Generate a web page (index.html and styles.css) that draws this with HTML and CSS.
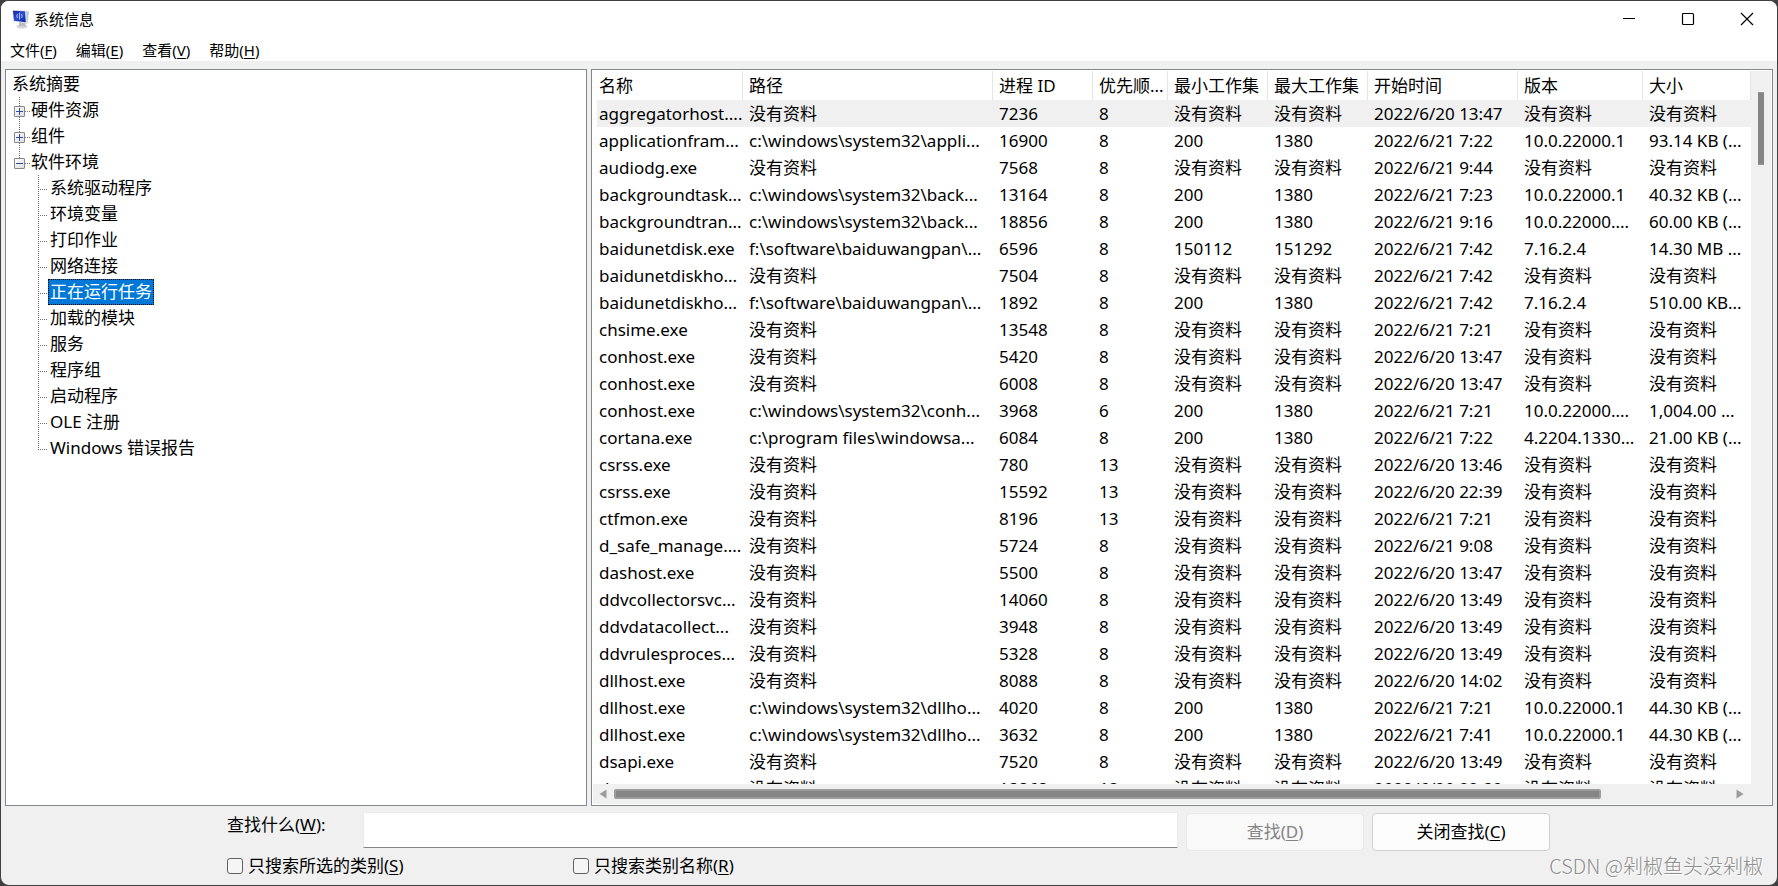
FILE: index.html
```html
<!DOCTYPE html>
<html lang="zh-CN">
<head>
<meta charset="utf-8">
<title>系统信息</title>
<link rel="stylesheet" href="styles.css">
</head>
<body>
<div class="window">
  <header class="titlebar">
    <svg class="app-icon" width="20" height="20" viewBox="0 0 20 20" aria-hidden="true">
      <defs>
        <linearGradient id="screen" x1="0" y1="0" x2="1" y2="1">
          <stop offset="0" stop-color="#16249c"/>
          <stop offset="0.500" stop-color="#2a4fd6"/>
          <stop offset="1" stop-color="#0c1f9a"/>
        </linearGradient>
      </defs>
      <ellipse cx="11" cy="17.500" rx="5.500" ry="2" fill="#d3d5d9"/>
      <path d="M8 13h6l1 4H8z" fill="#b9bcc3"/>
      <path d="M14.500 1.500l3.500 1.200-1.500 12-2.500-.7z" fill="#c3c8d2"/>
      <path d="M1.500 1l13.500.500 1 13L2.500 12.500z" fill="#dfe3ec"/>
      <path d="M2 1.800l12 .400.800 11L3 11.700z" fill="url(#screen)"/>
      <path d="M8.500 3.500v7M6.500 5q-1.500 2 0 4M10.500 5q1.500 2 0 4" stroke="#a9bcff" fill="none"/>
    </svg>
    <h1 class="title">系统信息</h1>
    <div class="window-buttons">
      <button class="window-button" type="button" aria-label="最小化"><svg width="14" height="14" viewBox="0 0 14 14"><path d="M1 6.500h12" stroke="#000" fill="none"/></svg></button>
      <button class="window-button" type="button" aria-label="最大化"><svg width="14" height="14" viewBox="0 0 14 14"><rect x="1.500" y="1.500" width="11" height="11" rx="1" stroke="#000" stroke-width="1.200" fill="none"/></svg></button>
      <button class="window-button" type="button" aria-label="关闭"><svg width="14" height="14" viewBox="0 0 14 14"><path d="M1 1l12 12M13 1L1 13" stroke="#000" stroke-width="1.200" fill="none"/></svg></button>
    </div>
  </header>
  <nav class="menubar">
    <button class="menu" type="button">文件(<u>F</u>)</button>
    <button class="menu" type="button">编辑(<u>E</u>)</button>
    <button class="menu" type="button">查看(<u>V</u>)</button>
    <button class="menu" type="button">帮助(<u>H</u>)</button>
  </nav>
  <main class="panes">
    <section class="pane tree-pane">
      <ul class="tree">
        <li class="node">系统摘要</li>
        <li class="node branch"><button class="expander" type="button" aria-label="展开"></button>硬件资源</li>
        <li class="node branch"><button class="expander" type="button" aria-label="展开"></button>组件</li>
        <li class="node branch last"><button class="expander open" type="button" aria-label="折叠"></button>软件环境</li>
        <li>
          <ul class="subtree">
            <li class="node leaf">系统驱动程序</li>
            <li class="node leaf">环境变量</li>
            <li class="node leaf">打印作业</li>
            <li class="node leaf">网络连接</li>
            <li class="node leaf"><span class="selected">正在运行任务</span></li>
            <li class="node leaf">加载的模块</li>
            <li class="node leaf">服务</li>
            <li class="node leaf">程序组</li>
            <li class="node leaf">启动程序</li>
            <li class="node leaf">OLE 注册</li>
            <li class="node leaf last">Windows 错误报告</li>
          </ul>
        </li>
      </ul>
    </section>
    <section class="pane list-pane">
      <div class="list-view">
        <table class="tasks">
          <colgroup><col class="c-name"><col class="c-path"><col class="c-set"><col class="c-priority"><col class="c-set"><col class="c-set"><col class="c-start"><col class="c-version"><col class="c-size"></colgroup>
          <thead><tr><th>名称</th><th>路径</th><th>进程 ID</th><th>优先顺...</th><th>最小工作集</th><th>最大工作集</th><th>开始时间</th><th>版本</th><th>大小</th></tr></thead>
          <tbody id="rows"></tbody>
        </table>
      </div>
      <div class="vscroll"><div class="vthumb"></div></div>
      <div class="hscroll">
        <svg width="8" height="10" viewBox="0 0 8 10"><path d="M7.500 0.500v9L0.500 5z" fill="#9c9c9c"/></svg>
        <div class="htrack"><div class="hthumb"></div></div>
        <svg width="8" height="10" viewBox="0 0 8 10"><path d="M0.500 0.500v9L7.500 5z" fill="#9c9c9c"/></svg>
      </div>
    </section>
  </main>
  <form class="find">
    <label class="find-label" for="what">查找什么(<u>W</u>):</label>
    <input class="find-input" id="what" type="text">
    <button class="push" type="button" disabled>查找(<u>D</u>)</button>
    <button class="push" type="button">关闭查找(<u>C</u>)</button>
    <div class="options">
      <label class="option"><input class="check" type="checkbox"><span>只搜索所选的类别(<u>S</u>)</span></label>
      <label class="option"><input class="check" type="checkbox"><span>只搜索类别名称(<u>R</u>)</span></label>
    </div>
    <span class="credit">CSDN @剁椒鱼头没剁椒</span>
  </form>
</div>
<script src="tasks.js"></script>
</body>
</html>
```

FILE: styles.css
```css
* {
  box-sizing: border-box;
}

body {
  margin: 0;
  background: #3f3f42;
  color: #000;
  font: 17px/26px "Noto Sans", "Noto Sans CJK SC", sans-serif;
}

button,
input {
  font: inherit;
  color: inherit;
}

ul {
  margin: 0;
  padding: 0;
  list-style: none;
}

u {
  text-underline-offset: 2px;
  text-decoration-thickness: 1px;
}

.window {
  display: flex;
  flex-direction: column;
  height: 100vh;
  border: 1px solid #3f3f42;
  border-radius: 9px;
  background: #f0f0f0;
  overflow: hidden;
}

.titlebar {
  display: flex;
  flex: none;
  align-items: center;
  height: 36px;
  padding: 0 1px 0 10px;
  background: #fff;
}

.app-icon {
  flex: none;
}

.title {
  flex: 1;
  margin: 0 0 0 3px;
  font-size: 15px;
  font-weight: 400;
}

.window-buttons {
  display: flex;
}

.window-button {
  display: flex;
  align-items: center;
  justify-content: center;
  width: 59px;
  height: 36px;
  padding: 0;
  border: 0;
  background: none;
}

.menubar {
  display: flex;
  flex: none;
  gap: 19px;
  height: 24px;
  padding-left: 9px;
  background: #fff;
}

.menu {
  height: 24px;
  padding: 2px 0 0;
  border: 0;
  background: none;
  font-size: 15px;
  line-height: 22px;
}

.panes {
  display: grid;
  flex: 1;
  grid-template-columns: minmax(0, 582fr) minmax(0, 1182fr);
  gap: 4px;
  min-height: 0;
  padding: 8px 4px 0;
}

.pane {
  min-height: 0;
  border: 1px solid #828790;
  background: #fff;
  overflow: hidden;
}

.tree-pane {
  padding: 1px 0 0 6px;
}

.node {
  display: flex;
  align-items: center;
  height: 26px;
  white-space: nowrap;
}

.branch {
  gap: 6px;
  padding-left: 2px;
  background:
    repeating-linear-gradient(to bottom, #707070 0 1px, transparent 1px 2px) 7px 0 / 1px 100% no-repeat,
    repeating-linear-gradient(to right, #707070 0 1px, transparent 1px 2px) 7px 14px / 11px 1px no-repeat;
}

.branch.last {
  background-size: 1px 14px, 11px 1px;
}

.expander {
  width: 11px;
  height: 11px;
  margin-top: 3px;
  padding: 0;
  border: 1px solid #868686;
  border-radius: 1px;
  background:
    linear-gradient(#304a9c, #304a9c) center / 7px 1px no-repeat,
    linear-gradient(#304a9c, #304a9c) center / 1px 7px no-repeat,
    linear-gradient(135deg, #fff, #dcdcdc);
}

.expander.open {
  background:
    linear-gradient(#304a9c, #304a9c) center / 7px 1px no-repeat,
    linear-gradient(135deg, #fff, #dcdcdc);
}

.subtree {
  padding-left: 26px;
}

.leaf {
  padding-left: 12px;
  background:
    repeating-linear-gradient(to bottom, #707070 0 1px, transparent 1px 2px) 0 0 / 1px 100% no-repeat,
    repeating-linear-gradient(to right, #707070 0 1px, transparent 1px 2px) 0 14px / 9px 1px no-repeat;
}

.leaf.last {
  background-size: 1px 14px, 9px 1px;
}

.selected {
  margin-left: -2px;
  padding: 0 1px;
  border: 1px dotted #ff8728;
  background: #0078d7;
  outline: 1px dotted #000;
  outline-offset: -1px;
  color: #fff;
  line-height: 24px;
}

.list-pane {
  display: grid;
  grid-template-columns: minmax(0, 1fr) 20px;
  grid-template-rows: minmax(0, 1fr) 20px;
  padding: 1px;
}

.list-view {
  overflow: hidden;
}

.tasks {
  width: 100%;
  border-collapse: separate;
  border-spacing: 0;
  table-layout: fixed;
}

.c-name, .c-start { width: 150px; }
.c-path { width: 250px; }
.c-set { width: 100px; }
.c-priority { width: 75px; }
.c-version { width: 125px; }

.tasks th,
.tasks td {
  height: 27px;
  padding: 0 0 0 6px;
  font-weight: 400;
  line-height: 27px;
  text-align: left;
  white-space: nowrap;
  overflow: hidden;
}

.tasks th {
  height: 29px;
  border-right: 1px solid #e5e5e5;
}

.tasks tbody tr:first-child {
  background: linear-gradient(#f0f0f0, #f0f0f0) 4px 0 no-repeat;
}

.vscroll {
  padding: 21px 7px 0;
  background: #f0f0f0;
}

.vthumb {
  height: 73px;
  border: 1px solid #979797;
  border-width: 1px 0;
  background: #858585;
}

.hscroll {
  display: flex;
  grid-column: 1 / -1;
  align-items: center;
  gap: 7px;
  padding: 0 27px 0 6px;
  background: #f0f0f0;
}

.htrack {
  flex: 1;
}

.hthumb {
  width: 88.500%;
  height: 10px;
  border: 2px solid #9c9c9c;
  border-radius: 2px;
  background: #858585;
}

.find {
  display: grid;
  flex: none;
  grid-template-columns: 128px minmax(0, 1fr) 178px 178px;
  grid-template-rows: 39px 30px;
  column-gap: 8px;
  align-items: center;
  padding: 6px 227px 4px 226px;
}

.find-label {
  align-self: start;
}

.find-input {
  align-self: start;
  width: 100%;
  height: 36px;
  padding: 0 8px;
  border: 1px solid #ebebeb;
  border-bottom-color: #868686;
  background: #fff;
}

.push {
  align-self: end;
  height: 38px;
  padding: 0;
  border: 1px solid #d0d0d0;
  border-radius: 4px;
  background: #fdfdfd;
}

.push:disabled {
  border-color: #e8e8e8;
  background: #f9f9f9;
  color: #838383;
}

.options {
  display: grid;
  grid-column: 1 / 3;
  grid-template-columns: 346px auto;
}

.option {
  display: flex;
  align-items: center;
  gap: 5px;
}

.check {
  width: 16px;
  height: 16px;
  margin: 0;
  border: 1px solid #626262;
  border-radius: 3px;
  background: #f5f5f5;
  appearance: none;
}

.credit {
  grid-column: 3 / 5;
  justify-self: end;
  margin-right: -213px;
  color: #8e8e8e;
  font-family: "Noto Sans CJK SC", sans-serif;
  font-size: 20px;
  font-weight: 300;
  white-space: nowrap;
  text-shadow: 1px 1px 0 #fff;
}
```

FILE: tasks.js
```js
const none = "没有资料";
const tasks = [
  ["aggregatorhost....", none, "7236", "8", none, none, "2022/6/20 13:47", none, none],
  ["applicationfram...", "c:\\windows\\system32\\appli...", "16900", "8", "200", "1380", "2022/6/21 7:22", "10.0.22000.1", "93.14 KB (..."],
  ["audiodg.exe", none, "7568", "8", none, none, "2022/6/21 9:44", none, none],
  ["backgroundtask...", "c:\\windows\\system32\\back...", "13164", "8", "200", "1380", "2022/6/21 7:23", "10.0.22000.1", "40.32 KB (..."],
  ["backgroundtran...", "c:\\windows\\system32\\back...", "18856", "8", "200", "1380", "2022/6/21 9:16", "10.0.22000....", "60.00 KB (..."],
  ["baidunetdisk.exe", "f:\\software\\baiduwangpan\\...", "6596", "8", "150112", "151292", "2022/6/21 7:42", "7.16.2.4", "14.30 MB ..."],
  ["baidunetdiskho...", none, "7504", "8", none, none, "2022/6/21 7:42", none, none],
  ["baidunetdiskho...", "f:\\software\\baiduwangpan\\...", "1892", "8", "200", "1380", "2022/6/21 7:42", "7.16.2.4", "510.00 KB..."],
  ["chsime.exe", none, "13548", "8", none, none, "2022/6/21 7:21", none, none],
  ["conhost.exe", none, "5420", "8", none, none, "2022/6/20 13:47", none, none],
  ["conhost.exe", none, "6008", "8", none, none, "2022/6/20 13:47", none, none],
  ["conhost.exe", "c:\\windows\\system32\\conh...", "3968", "6", "200", "1380", "2022/6/21 7:21", "10.0.22000....", "1,004.00 ..."],
  ["cortana.exe", "c:\\program files\\windowsa...", "6084", "8", "200", "1380", "2022/6/21 7:22", "4.2204.1330...", "21.00 KB (..."],
  ["csrss.exe", none, "780", "13", none, none, "2022/6/20 13:46", none, none],
  ["csrss.exe", none, "15592", "13", none, none, "2022/6/20 22:39", none, none],
  ["ctfmon.exe", none, "8196", "13", none, none, "2022/6/21 7:21", none, none],
  ["d_safe_manage....", none, "5724", "8", none, none, "2022/6/21 9:08", none, none],
  ["dashost.exe", none, "5500", "8", none, none, "2022/6/20 13:47", none, none],
  ["ddvcollectorsvc...", none, "14060", "8", none, none, "2022/6/20 13:49", none, none],
  ["ddvdatacollect...", none, "3948", "8", none, none, "2022/6/20 13:49", none, none],
  ["ddvrulesproces...", none, "5328", "8", none, none, "2022/6/20 13:49", none, none],
  ["dllhost.exe", none, "8088", "8", none, none, "2022/6/20 14:02", none, none],
  ["dllhost.exe", "c:\\windows\\system32\\dllho...", "4020", "8", "200", "1380", "2022/6/21 7:21", "10.0.22000.1", "44.30 KB (..."],
  ["dllhost.exe", "c:\\windows\\system32\\dllho...", "3632", "8", "200", "1380", "2022/6/21 7:41", "10.0.22000.1", "44.30 KB (..."],
  ["dsapi.exe", none, "7520", "8", none, none, "2022/6/20 13:49", none, none],
  ["dwm.exe", none, "18868", "13", none, none, "2022/6/20 22:39", none, none],
];

const body = document.getElementById("rows");
for (const task of tasks) {
  const row = body.insertRow();
  for (const value of task) row.insertCell().textContent = value;
}
```
